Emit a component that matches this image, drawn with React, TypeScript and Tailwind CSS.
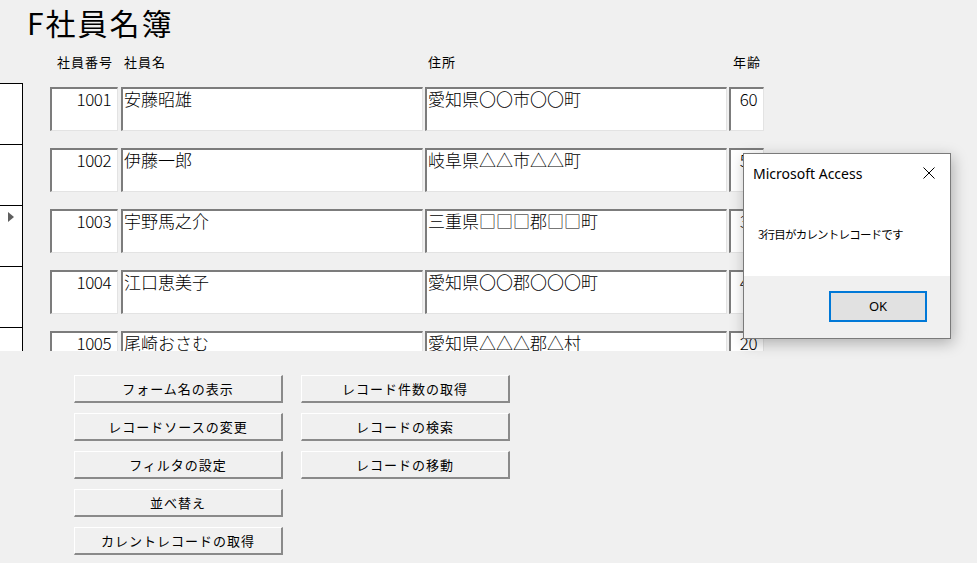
import React from 'react';

// Employee records shown in the continuous form
const employees = [
  { id: 1001, name: '安藤昭雄', address: '愛知県〇〇市〇〇町', age: 60 },
  { id: 1002, name: '伊藤一郎', address: '岐阜県△△市△△町', age: 52 },
  { id: 1003, name: '宇野馬之介', address: '三重県□□□郡□□町', age: 35 },
  { id: 1004, name: '江口恵美子', address: '愛知県〇〇郡〇〇〇町', age: 41 },
  { id: 1005, name: '尾崎おさむ', address: '愛知県△△△郡△村', age: 20 },
];

const leftButtons = ['フォーム名の表示', 'レコードソースの変更', 'フィルタの設定', '並べ替え', 'カレントレコードの取得'];
const rightButtons = ['レコード件数の取得', 'レコードの検索', 'レコードの移動'];

const jp = "font-['Noto_Sans_CJK_JP',sans-serif]";

// Sunken Access-style text box
const Field = ({ width, align = 'left', children }: { width: string; align?: 'left' | 'right'; children: React.ReactNode }) => (
  <div
    className={`${width} h-[44px] bg-white border-t-2 border-l-2 border-b border-r border-t-[#7c7c7c] border-l-[#7c7c7c] border-b-[#e3e3e3] border-r-[#e3e3e3] text-[17px] leading-[20px] font-light text-black overflow-hidden whitespace-nowrap ${
      align === 'right' ? 'text-right pr-[6px] tracking-[-0.5px]' : 'pl-[1px]'
    }`}
  >
    {children}
  </div>
);

// Raised command button
const CmdButton = ({ label }: { label: string }) => (
  <button className="w-[209px] h-[28px] bg-[#f0f0f0] border-t border-l border-b-2 border-r-2 border-t-white border-l-white border-b-[#8a8a8a] border-r-[#8a8a8a] text-[13px] tracking-[1px] text-black flex items-center justify-center">
    {label}
  </button>
);

const App = () => {
  return (
    <div className={`relative w-[977px] h-[563px] overflow-hidden bg-[#f0f0f0] ${jp}`}>
      {/* Form header */}
      <div className="h-[83px] flex flex-col">
        <div className="h-[52px] pl-[27px] text-[30px] leading-[44px] tracking-[2px] text-black">F社員名簿</div>
        <div className="h-[20px] flex items-center pl-[57px] text-[13px] tracking-[1px] text-black">
          <span className="w-[67px]">社員番号</span>
          <span className="w-[304px]">社員名</span>
          <span className="w-[305px]">住所</span>
          <span>年齢</span>
        </div>
      </div>

      {/* Detail section (continuous records) */}
      <div className="h-[268px] overflow-hidden">
        {employees.map((e, i) => (
          <div key={e.id} className="h-[61px] flex">
            <div className="w-[23px] h-full bg-white border-t border-r border-black shrink-0">
              {i === 2 && (
                <div className="mt-[6px] ml-[8px] w-0 h-0 border-y-[5px] border-y-transparent border-l-[6px] border-l-[#5f5f5f]" />
              )}
            </div>
            <div className="flex ml-[27px] mt-[4px] items-start">
              <Field width="w-[68px]" align="right">{e.id}</Field>
              <div className="ml-[3px]">
                <Field width="w-[302px]">{e.name}</Field>
              </div>
              <div className="ml-[2px]">
                <Field width="w-[302px]">{e.address}</Field>
              </div>
              <div className="ml-[2px]">
                <Field width="w-[35px]" align="right">{e.age}</Field>
              </div>
            </div>
          </div>
        ))}
      </div>

      {/* Command buttons */}
      <div className="flex gap-[18px] pl-[74px] pt-[24px]">
        <div className="flex flex-col gap-[10px]">
          {leftButtons.map((b) => (
            <CmdButton key={b} label={b} />
          ))}
        </div>
        <div className="flex flex-col gap-[10px]">
          {rightButtons.map((b) => (
            <CmdButton key={b} label={b} />
          ))}
        </div>
      </div>

      {/* Message box */}
      <div className="absolute left-[743px] top-[153px] w-[208px] h-[186px] border border-[#7a7a7a] bg-white shadow-[2px_4px_14px_rgba(0,0,0,0.28)] flex flex-col">
        <div className="h-[122px] bg-white">
          <div className="h-[38px] flex items-center justify-between pl-[9px] pr-[15px]">
            <span className="font-['Noto_Sans',sans-serif] text-[14px] text-black">Microsoft Access</span>
            <svg width="12" height="12" viewBox="0 0 12 12" className="text-black">
              <path d="M0.5 0.5 L11.5 11.5 M11.5 0.5 L0.5 11.5" stroke="currentColor" strokeWidth="1" fill="none" />
            </svg>
          </div>
          <div className="mt-[32px] pl-[14px] text-[11.5px] leading-[20px] tracking-[-0.8px] text-black">
            3行目がカレントレコードです
          </div>
        </div>
        <div className="flex-1 bg-[#f0f0f0] flex justify-end items-start pr-[23px] pt-[15px]">
          <button className="w-[98px] h-[31px] bg-[#e1e1e1] border-2 border-[#0078d7] font-['Noto_Sans',sans-serif] text-[13px] text-black flex items-center justify-center">
            OK
          </button>
        </div>
      </div>
    </div>
  );
};

export default App;
